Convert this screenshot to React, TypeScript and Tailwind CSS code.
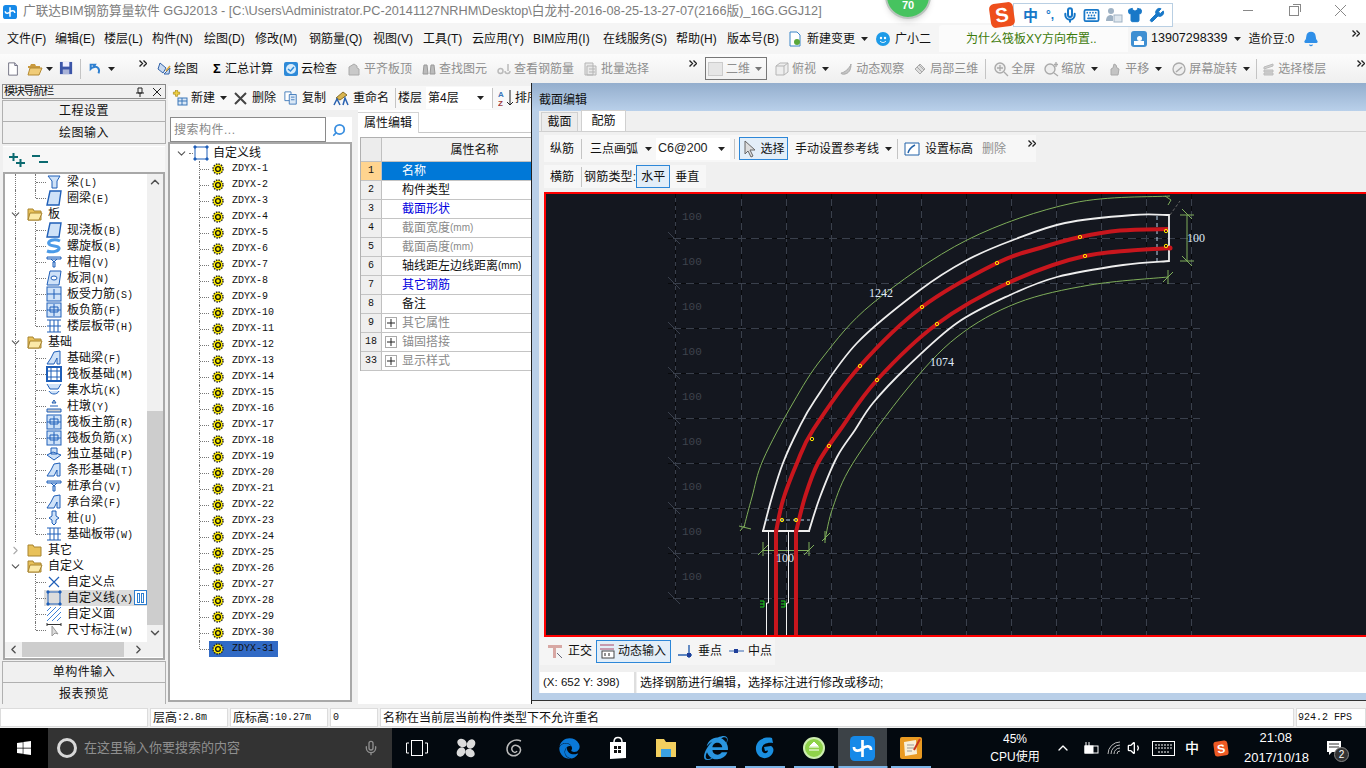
import { ChevronDown, ChevronRight, ChevronUp, ChevronLeft, Mic, Keyboard, Shirt, Wrench, Bell, Volume1, Search } from "lucide-react";
import { FaWindows, FaEdge, FaInternetExplorer } from "react-icons/fa";
import type { ReactNode } from "react";

const Arrow = ({ className = "" }: { className?: string }) => (
  <svg width="7" height="4" viewBox="0 0 7 4" className={`shrink-0 ${className}`}><path d="M0 0h7L3.5 4z" fill="#222" /></svg>
);

const Sep = ({ className = "" }: { className?: string }) => <div className={`w-px h-[20px] shrink-0 bg-[#c4c4c4] ${className}`} />;

const More = ({ className = "" }: { className?: string }) => (
  <svg width="8" height="7" viewBox="0 0 8 7" className={`shrink-0 ${className}`} fill="none" stroke="#222" strokeWidth="1.4"><path d="M0.5 0.5L3.5 3.5L0.5 6.5M4.5 0.5L7.5 3.5L4.5 6.5" /></svg>
);

function Ico({ children, s = 16, className = "" }: { children: ReactNode; s?: number; className?: string }) {
  return <svg width={s} height={s} viewBox="0 0 16 16" className={`shrink-0 ${className}`}>{children}</svg>;
}

// gray disabled tool icon
const GrayIco = ({ kind }: { kind: string }) => (
  <Ico>
    {kind === "stack" && <path d="M3 14V6l5-3 3 2v2l2 1v6z" fill="#c9c9c9" stroke="#aaa" />}
    {kind === "bino" && <path d="M2 13l1-9h3l1 9zM9 13l1-9h3l1 9z" fill="#bbb" stroke="#999" />}
    {kind === "link" && <path d="M2 10a2.5 2.5 0 0 1 5 0 2.5 2.5 0 0 1-5 0zM9 10a2.5 2.5 0 0 0 5 0M12 3v7" fill="none" stroke="#bbb" strokeWidth="1.5" />}
    {kind === "batch" && <path d="M2 2h8v12H2zM4 5h9v9H4zM6 8h6M6 11h6" fill="#e8e8e8" stroke="#b5b5b5" />}
    {kind === "box" && <path d="M2 5l4-3h8v9l-4 3H2zM2 5h8v9M10 5l4-3" fill="#eee" stroke="#b5b5b5" />}
    {kind === "orbit" && <path d="M3 12C6 12 12 7 13 3c0 4-1 9-6 10-2 .5-4 0-4-1z" fill="#c4c4c4" stroke="#aaa" />}
    {kind === "cube" && <path d="M3 8l5-5 5 5-5 5zM5 6l5 5M7 4l5 5" fill="#ddd" stroke="#aaa" />}
    {kind === "zoom" && <><circle cx="7" cy="7" r="5" fill="#eee" stroke="#aaa" strokeWidth="1.4" /><path d="M11 11l4 4M4 7h6M7 4v6" stroke="#aaa" strokeWidth="1.3" /></>}
    {kind === "zoom2" && <><circle cx="7" cy="8" r="5" fill="#eee" stroke="#aaa" strokeWidth="1.4" /><path d="M11 12l4 3M13 1v5M11 3.500h4" stroke="#aaa" strokeWidth="1.3" /></>}
    {kind === "hand" && <path d="M4 14V8l2-1 1-4 2 1 1 3 2 1-1 6z" fill="#c4c4c4" stroke="#aaa" />}
    {kind === "rotate" && <><circle cx="8" cy="8" r="6" fill="#eee" stroke="#aaa" strokeWidth="1.3" /><path d="M5 11l6-5" stroke="#aaa" strokeWidth="1.5" /></>}
    {kind === "floors" && <path d="M4 6l9-3v2L4 8zM4 9h9v2H4zM4 12h9v2H4z" fill="#d2d2d2" stroke="#bbb" />}
  </Ico>
);

function Tool({ icon, label, ml, gray, arrow }: { icon: ReactNode; label: string; ml: string; gray?: boolean; arrow?: boolean }) {
  return (
    <div className={`flex items-center shrink-0 ${ml}`}>
      {icon}
      <span className={`ml-[2px] ${gray ? "text-[#8f8f8f]" : "text-[#111]"}`}>{label}</span>
      {arrow && <Arrow className="ml-[6px]" />}
    </div>
  );
}

const AppLogo = ({ s = 14 }: { s?: number }) => (
  <svg width={s} height={s} viewBox="0 0 16 16" className="shrink-0">
    <rect width="16" height="16" rx="3" fill="#1689e8" />
    <path d="M8 2.500v11M2.500 7c0 3 3.500 3 5.500 1s5.500-2 5.500 1" fill="none" stroke="#fff" strokeWidth="1.700" />
  </svg>
);

const menus = [
  ["文件(F)", "w-[48px]"], ["编辑(E)", "w-[49px]"], ["楼层(L)", "w-[48px]"], ["构件(N)", "w-[52px]"], ["绘图(D)", "w-[51px]"],
  ["修改(M)", "w-[54px]"], ["钢筋量(Q)", "w-[64px]"], ["视图(V)", "w-[50px]"], ["工具(T)", "w-[49px]"], ["云应用(Y)", "w-[61px]"],
  ["BIM应用(I)", "w-[70px]"], ["在线服务(S)", "w-[73px]"], ["帮助(H)", "w-[51px]"], ["版本号(B)", "w-[60px]"],
];

function TitleBar() {
  return (
    <div className="h-[23px] bg-white flex items-center shrink-0 relative text-[12.7px] text-[#7d7d7d]">
      <div className="ml-[3px]"><AppLogo /></div>
      <span className="ml-[6px] whitespace-nowrap">广联达BIM钢筋算量软件 GGJ2013 - [C:\Users\Administrator.PC-20141127NRHM\Desktop\白龙村-2016-08-25-13-27-07(2166版)_16G.GGJ12]</span>
      {/* floating speed ball */}
      <div className="absolute left-[885px] top-[-27px] w-[46px] h-[46px] rounded-full bg-[#46c35f] border-2 border-[#b9c4bd] shadow-md flex items-end justify-center pb-[4px] text-white text-[11px] font-bold">70</div>
      {/* ime bar */}
      <div className="absolute left-[1013px] top-[3px] w-[160px] h-[24px] bg-white border border-[#b9cfe3] flex items-center pl-[9px] text-[#1878c8] z-10">
        <span className="text-[15px] font-bold leading-none">中</span>
        <span className="text-[12px] font-bold leading-none ml-[8px]">°,</span>
        <Mic size={16} strokeWidth={3} className="ml-[8px]" />
        <Keyboard size={17} strokeWidth={2.5} className="ml-[5px]" />
        <svg width="18" height="16" viewBox="0 0 18 16" className="ml-[5px]"><circle cx="6" cy="4" r="3" fill="#9fb2c4" /><path d="M1 14c0-4 2-6 5-6l2 1v5z" fill="#9fb2c4" /><rect x="9" y="8" width="8" height="7" fill="#dfe7ee" stroke="#9fb2c4" /></svg>
        <Shirt size={16} fill="#1878c8" strokeWidth={1.5} className="ml-[4px]" />
        <Wrench size={16} fill="#1878c8" strokeWidth={1.5} className="ml-[6px]" />
      </div>
      <div className="absolute left-[990px] top-[3px] w-[24px] h-[24px] rounded-[5px] bg-[#ee4f1c] rotate-[-8deg] flex items-center justify-center text-white text-[20px] font-bold leading-none z-20">S</div>
      <div className="absolute right-[20px] top-[5px] flex items-center gap-[36px]">
        <div className="w-[10px] h-px bg-[#888]" />
        <div className="w-[10px] h-[10px] border border-[#888] relative"><div className="absolute -top-[3px] -right-[3px] w-[8px] h-[8px] border-t border-r border-[#888]" /></div>
        <svg width="11" height="11" viewBox="0 0 11 11"><path d="M0 0l11 11M11 0L0 11" stroke="#888" /></svg>
      </div>
    </div>
  );
}

function MenuBar() {
  return (
    <div className="h-[31px] bg-[#f5f5f5] flex items-center shrink-0 text-[12px] text-[#111] pl-[7px] whitespace-nowrap">
      {menus.map(([m, w]) => <span key={m} className={`${w} shrink-0`}>{m}</span>)}
      <Ico><path d="M3 1h7l3 3v11H3z" fill="#fff" stroke="#3a86c8" /><circle cx="10" cy="11" r="3" fill="#5aa83c" /></Ico>
      <span className="ml-[4px]">新建变更</span>
      <Arrow className="ml-[6px]" />
      <Ico className="ml-[7px]"><circle cx="8" cy="8" r="7" fill="#1e9be8" /><circle cx="6" cy="7" r="1.2" fill="#fff" /><circle cx="10" cy="7" r="1.2" fill="#fff" /><path d="M5 10c2 2 4 2 6 0" stroke="#fff" fill="none" /></Ico>
      <span className="ml-[4px]">广小二</span>
      <div className="ml-[8px] w-[189px] h-[27px] bg-[#fbfbfb] rounded-t-[3px] flex items-center pl-[27px] text-[#3c7a0a]">为什么筏板XY方向布置..</div>
      <div className="w-[16px] h-[16px] rounded-[3px] bg-[#3f8fd2] ml-[3px] flex flex-col items-center justify-end"><div className="w-[5px] h-[5px] rounded-full bg-white" /><div className="w-[10px] h-[4px] bg-white mb-[2px]" /></div>
      <span className="ml-[4px] text-[12.5px]">13907298339</span>
      <Arrow className="ml-[6px]" />
      <span className="ml-[8px]">造价豆:0</span>
      <Bell size={16} fill="#2f8fe8" stroke="#2f8fe8" className="ml-[8px]" />
      <More className="ml-[33px] -mt-[10px]" />
    </div>
  );
}

function ToolBar() {
  return (
    <div className="h-[29px] bg-gradient-to-b from-[#fcfcfc] to-[#efefef] flex items-center shrink-0 text-[12px] whitespace-nowrap pl-[6px]">
      <Ico s={14}><path d="M3 1h7l3 3v11H3z" fill="#fff" stroke="#667" /><path d="M10 1v3h3" fill="#dde" stroke="#667" /></Ico>
      <Ico className="ml-[7px]"><path d="M1 5h2l1-2h4l1 2h4v2H1z" fill="#c99a3e" /><path d="M1 14l2-7h12l-3 7z" fill="#f0cc78" stroke="#b48a32" /></Ico>
      <Arrow className="ml-[3px]" />
      <Ico className="ml-[6px]" s={15}><path d="M1 1h13v13H1z" fill="#3c55a8" /><path d="M4 1h7v5H4z" fill="#eef" /><path d="M4 9h7v5H4z" fill="#a9b3d8" /></Ico>
      <Sep className="ml-[6px]" />
      <Ico className="ml-[7px]" s={14}><path d="M12 13c2-5-1-9-6-7L8 3H3v5l2-2" fill="none" stroke="#2e7fd0" strokeWidth="2.2" /></Ico>
      <Arrow className="ml-[6px]" />
      <More className="ml-[24px] -mt-[10px]" />
      <Tool ml="ml-[9px]" label="绘图" icon={<Ico><path d="M4 2l6 5-3 5-5-4zM8 13l6-6-1 6z" fill="#c8daf2" stroke="#3363a8" /><path d="M10 10l4-5" stroke="#d9a53a" strokeWidth="1.600" /></Ico>} />
      <Tool ml="ml-[13px]" label="汇总计算" icon={<span className="w-[12px] font-bold text-[13px] text-center">Σ</span>} />
      <Tool ml="ml-[10px]" label="云检查" icon={<Ico><rect x="1" y="1" width="14" height="14" rx="2" fill="#2e8ad8" /><circle cx="8" cy="8" r="5" fill="#d8ecfb" /><path d="M5 8l2.500 2 3.500-4" stroke="#2e8ad8" strokeWidth="1.500" fill="none" /></Ico>} />
      <Tool ml="ml-[9px]" gray label="平齐板顶" icon={<GrayIco kind="stack" />} />
      <Tool ml="ml-[9px]" gray label="查找图元" icon={<GrayIco kind="bino" />} />
      <Tool ml="ml-[9px]" gray label="查看钢筋量" icon={<GrayIco kind="link" />} />
      <Tool ml="ml-[9px]" gray label="批量选择" icon={<GrayIco kind="batch" />} />
      <More className="ml-[40px] -mt-[10px]" />
      <div className="ml-[8px] w-[62px] h-[23px] border border-[#777] flex items-center pl-[2px] text-[#8f8f8f]">
        <div className="w-[15px] h-[14px] bg-[#e6e6e6] border border-[#ccc]" />
        <span className="ml-[3px]">二维</span>
        <Arrow className="ml-[5px] opacity-60" />
      </div>
      <Tool ml="ml-[7px]" gray arrow label="俯视" icon={<GrayIco kind="box" />} />
      <Tool ml="ml-[9px]" gray label="动态观察" icon={<GrayIco kind="orbit" />} />
      <Tool ml="ml-[8px]" gray label="局部三维" icon={<GrayIco kind="cube" />} />
      <Sep className="ml-[7px]" />
      <Tool ml="ml-[7px]" gray label="全屏" icon={<GrayIco kind="zoom" />} />
      <Tool ml="ml-[8px]" gray arrow label="缩放" icon={<GrayIco kind="zoom2" />} />
      <Tool ml="ml-[9px]" gray arrow label="平移" icon={<GrayIco kind="hand" />} />
      <Tool ml="ml-[9px]" gray arrow label="屏幕旋转" icon={<GrayIco kind="rotate" />} />
      <Sep className="ml-[6px]" />
      <Tool ml="ml-[3px]" gray label="选择楼层" icon={<GrayIco kind="floors" />} />
      <More className="ml-[31px] -mt-[10px]" />
    </div>
  );
}

type Node = { t: string; k?: string; i?: string; open?: boolean; last?: boolean };

const navTree: Node[] = [
  { t: "梁", k: "(L)", i: "beam" }, { t: "圈梁", k: "(E)", i: "plate", last: true },
  { t: "板", open: true },
  { t: "现浇板", k: "(B)", i: "plate" }, { t: "螺旋板", k: "(B)", i: "spiral" }, { t: "柱帽", k: "(V)", i: "cap" }, { t: "板洞", k: "(N)", i: "hole" },
  { t: "板受力筋", k: "(S)", i: "grid" }, { t: "板负筋", k: "(F)", i: "grid2" }, { t: "楼层板带", k: "(H)", i: "band", last: true },
  { t: "基础", open: true },
  { t: "基础梁", k: "(F)", i: "beam2" }, { t: "筏板基础", k: "(M)", i: "raft" }, { t: "集水坑", k: "(K)", i: "pit" }, { t: "柱墩", k: "(Y)", i: "pier" },
  { t: "筏板主筋", k: "(R)", i: "grid2" }, { t: "筏板负筋", k: "(X)", i: "grid2" }, { t: "独立基础", k: "(P)", i: "foot" }, { t: "条形基础", k: "(T)", i: "beam2" },
  { t: "桩承台", k: "(V)", i: "cap" }, { t: "承台梁", k: "(F)", i: "beam2" }, { t: "桩", k: "(U)", i: "pile" }, { t: "基础板带", k: "(W)", i: "band", last: true },
];

function TreeIcon({ i }: { i: string }) {
  const b = "#1f5fb8";
  const l = "#cfe2f8";
  return (
    <Ico>
      {i === "beam" && <path d="M2 2h12l-3 5v7H6V7z" fill={l} stroke={b} />}
      {i === "plate" && <path d="M4 1h11l-2 14H1z" fill={l} stroke={b} strokeWidth="1.4" />}
      {i === "spiral" && <path d="M14 3C8 0 1 3 3 6s9 1 10 4-7 5-12 3" fill="none" stroke="#4b9be8" strokeWidth="3" />}
      {i === "cap" && <path d="M1 3h14v2H1zM5 5l3 3 3-3M7 8h2v5H7z" fill={l} stroke={b} />}
      {i === "hole" && <><path d="M4 1h11l-2 14H1z" fill={l} stroke={b} /><ellipse cx="8" cy="8" rx="3" ry="2" fill="#fff" stroke={b} /></>}
      {i === "grid" && <><rect x="1" y="1" width="14" height="14" fill={l} stroke={b} /><path d="M1 8h14M8 3v10" stroke={b} /></>}
      {i === "grid2" && <><rect x="1" y="1" width="14" height="14" fill={l} stroke={b} /><path d="M4 5h8v5H4zM1 8h14M8 2v12" fill="none" stroke={b} /></>}
      {i === "band" && <path d="M1 2h14M1 14h14M4 2v12M8 2v12M12 2v12M1 8h14" stroke={b} fill="none" />}
      {i === "beam2" && <path d="M1 14l4-6 3-6 6-1v13h-3V8l-3 6z" fill={l} stroke={b} />}
      {i === "raft" && <><rect x="1" y="1" width="14" height="14" fill="#fff" stroke={b} strokeWidth="2" /><path d="M5 1v14M11 1v14M1 5h14M1 11h14" stroke={b} /></>}
      {i === "pit" && <path d="M1 2l3 5h8l3-5M3 9c2 4 8 4 10 0" fill={l} stroke={b} />}
      {i === "pier" && <path d="M6 5l2-3 2 3zM4 8h8M1 11h14v3H1z" fill="#ccc" stroke={b} />}
      {i === "foot" && <path d="M1 9l6-3 8 3-7 5zM5 2h6v6H5z" fill={l} stroke={b} />}
      {i === "pile" && <path d="M6 1h4v5l3 2-3 2v3l-2 2-2-2v-3L3 8l3-2z" fill={l} stroke={b} />}
      {i === "cross" && <path d="M3 3l10 10M13 3L3 13" stroke={b} strokeWidth="1.2" />}
      {i === "line" && <><rect x="2" y="2" width="12" height="12" fill="none" stroke={b} /><path d="M1 1h2v2H1zM13 1h2v2h-2zM1 13h2v2H1zM13 13h2v2h-2z" fill={b} stroke={b} /></>}
      {i === "hatch" && <path d="M1 5l4-4M1 10l9-9M1 15L15 1M6 15l9-9M11 15l4-4" stroke="#3f82d8" />}
      {i === "dim" && <><path d="M1 1v3M15 1v3M1 2.5h14" stroke="#333" /><path d="M6 4v10l3-3 3 1z" fill="#ddd" stroke="#999" /></>}
    </Ico>
  );
}

const Guide = ({ half }: { half?: boolean }) => <div className={`border-r border-dotted border-[#777] self-start ${half ? "h-2" : "h-4"}`} />;

function Folder({ open }: { open?: boolean }) {
  return (
    <Ico className="ml-[5px]">
      <path d="M1 3h5l1 2h7v9H1z" fill="#e8c15a" stroke="#a8842e" />
      {open && <path d="M3 7h12l-3 7H1z" fill="#fbe9a8" stroke="#a8842e" />}
    </Ico>
  );
}

function NavRow({ n, outer = true }: { n: Node; outer?: boolean }) {
  return (
    <div className="h-4 flex items-center">
      <div className="w-[11px] self-start"><div className={outer ? "" : "invisible"}><Guide /></div></div>
      <div className="w-5 flex justify-end self-start"><div className="w-px"><Guide half={n.last} /></div></div>
      <div className="w-[10px] border-t border-dotted border-[#777]" />
      <TreeIcon i={n.i ?? "plate"} />
      <span className="ml-[5px] whitespace-nowrap text-[12px] leading-none">{n.t}<span className="font-['Liberation_Mono',monospace] text-[10px]">{n.k}</span></span>
    </div>
  );
}

function FolderRow({ t, open }: { t: string; open?: boolean }) {
  return (
    <div className="h-4 flex items-center">
      <div className="w-[3px]" />
      <div className="w-[14px] flex justify-center bg-white">
        {open ? <ChevronDown size={13} strokeWidth={2} className="text-[#555]" /> : <ChevronRight size={13} strokeWidth={2} className="text-[#aaa]" />}
      </div>
      <Folder open={open} />
      <span className="ml-[5px] text-[12px] leading-none">{t}</span>
    </div>
  );
}

function NavPanel() {
  return (
    <div className="w-[168px] shrink-0 flex flex-col bg-[#f0f0f0] pl-[2px] text-[12px] text-[#111]">
      <div className="h-[15px] mt-[1px] border border-[#8a8a8a] flex items-center justify-between pl-px pr-[3px] w-[164px] shrink-0">
        <span className="text-[11px] tracking-[-1.2px]">模块导航栏</span>
        <div className="flex items-center gap-[9px] mr-[1px]">
          <svg width="8" height="10" viewBox="0 0 8 10"><path d="M2 1h4v5H2zM0 6h8M4 6v4" stroke="#222" fill="none" /></svg>
          <svg width="8" height="8" viewBox="0 0 8 8"><path d="M0 0l8 8M8 0L0 8" stroke="#222" /></svg>
        </div>
      </div>
      <div className="mt-[1px] h-[22px] w-[164px] border border-[#b0b0b0] flex items-center justify-center tracking-[0.5px] shrink-0">工程设置</div>
      <div className="h-[22px] w-[164px] border border-t-0 border-[#b0b0b0] flex items-center justify-center tracking-[0.5px] shrink-0">绘图输入</div>
      <div className="mt-[2px] h-[26px] w-[162px] ml-px bg-[#f7f7f7] flex items-center pl-[5px] gap-[5px] shrink-0 border-t border-white">
        <svg width="18" height="16" viewBox="0 0 18 16"><path d="M1 5h9M5.500 1v8M8 11h9M12.500 7v8" stroke="#0b6a70" strokeWidth="2" fill="none" /></svg>
        <svg width="18" height="16" viewBox="0 0 18 16"><path d="M1 4h8M8 10h9" stroke="#0b6a70" strokeWidth="2" fill="none" /></svg>
      </div>
      <div className="h-[488px] w-[162px] ml-px border-2 border-[#a8a8a8] flex flex-col shrink-0 bg-white">
        <div className="flex-1 flex min-h-0">
          <div className="w-[142px] overflow-hidden">
            {navTree.map((n) =>
              n.i ? <NavRow key={n.t} n={n} /> : <div key={n.t} className="relative"><div className="absolute left-0 top-0 w-[11px]"><Guide /></div><FolderRow t={n.t} open={n.open} /></div>
            )}
            <FolderRow t="其它" />
            <FolderRow t="自定义" open />
            <NavRow outer={false} n={{ t: "自定义点", i: "cross" }} />
            <div className="relative bg-[#dcdcdc] ml-[39px] h-4">
              <div className="-ml-[39px] w-[142px]">
                <NavRow outer={false} n={{ t: "自定义线", k: "(X)", i: "line" }} />
              </div>
              <div className="absolute right-0 top-0 w-[13px] h-[15px] bg-white border border-[#2d7ed0] flex justify-center gap-px pt-[2px]">
                <div className="w-[3px] h-[10px] border border-[#2d7ed0]" /><div className="w-[3px] h-[10px] border border-[#2d7ed0]" />
              </div>
            </div>
            <NavRow outer={false} n={{ t: "自定义面", i: "hatch" }} />
            <NavRow outer={false} n={{ t: "尺寸标注", k: "(W)", i: "dim", last: true }} />
          </div>
          <div className="w-[16px] bg-[#f0f0f0] flex flex-col">
            <ChevronUp size={14} strokeWidth={2.5} className="mx-auto mt-[1px] shrink-0 text-[#505050]" />
            <div className="h-[222px] shrink-0" />
            <div className="h-[214px] bg-[#cdcdcd] shrink-0" />
            <ChevronDown size={14} strokeWidth={2.5} className="mx-auto mt-[1px] shrink-0 text-[#505050]" />
          </div>
        </div>
        <div className="h-[15px] bg-[#f0f0f0] flex items-center shrink-0 mb-[1px]">
          <ChevronLeft size={13} strokeWidth={2.5} className="ml-[2px] text-[#505050]" />
          <div className="ml-[2px] w-[102px] h-full bg-[#cdcdcd]" />
          <ChevronRight size={13} strokeWidth={2.5} className="ml-[8px] text-[#505050]" />
        </div>
      </div>
      <div className="mt-px h-[22px] w-[164px] border border-[#b0b0b0] flex items-center justify-center tracking-[0.5px] shrink-0">单构件输入</div>
      <div className="h-[22px] w-[164px] border border-t-0 border-[#b0b0b0] flex items-center justify-center tracking-[0.5px] shrink-0">报表预览</div>
    </div>
  );
}

const Sun = () => (
  <svg width="12" height="12" viewBox="0 0 12 12" className="shrink-0">
    <circle cx="6" cy="6" r="5" fill="#ffee00" stroke="#222" strokeWidth="1.400" strokeDasharray="1.500 1.100" />
    <circle cx="6" cy="6" r="2.400" fill="#ffee00" stroke="#111" strokeWidth="1.300" />
  </svg>
);

function CompTree() {
  const ids = Array.from({ length: 31 }, (_, i) => i + 1);
  return (
    <div className="flex-1 min-h-0 border-2 border-[#a8a8a8] bg-white text-[12px] text-[#111]">
      <div className="h-4 mt-[1px] flex items-center pl-[5px]">
        <ChevronDown size={13} strokeWidth={2} className="text-[#555]" />
        <div className="w-[4px] ml-[1px] border-t border-dotted border-[#777]" />
        <TreeIcon i="line" />
        <span className="ml-[4px]">自定义线</span>
      </div>
      {ids.map((n) => (
        <div key={n} className="h-4 flex items-center">
          <div className={`w-[30px] border-r border-dotted border-[#777] self-start ${n === 31 ? "h-2" : "h-4"}`} />
          <div className="w-[9px] border-t border-dotted border-[#777]" />
          <div className={`flex items-center h-4 w-[69px] ${n === 31 ? "bg-[#316ac5]" : ""} pl-[3px]`}>
            <Sun />
            <span className="ml-[8px] font-['Liberation_Mono',monospace] text-[10px] leading-none text-[#111]">ZDYX-{n}</span>
          </div>
        </div>
      ))}
    </div>
  );
}

function SubToolBar() {
  return (
    <div className="h-[27px] pt-[3px] shrink-0 overflow-hidden bg-[#f0f0f0]">
      <div className="h-[24px] bg-[#f8f8f8] flex items-center whitespace-nowrap text-[12px] text-[#111] pl-[4px]">
        <Ico><path d="M2 3h3V0h3v3h3v3H8v3H5V6H2z" transform="scale(.7)" fill="#f0d040" stroke="#a88a20" /><rect x="6" y="8" width="9" height="7" fill="#dbe8f6" stroke="#3a76b8" /><path d="M6 11h9M10 8v7" stroke="#3a76b8" /></Ico>
        <span className="ml-[3px] shrink-0">新建</span>
        <Arrow className="ml-[5px]" />
        <svg width="13" height="13" viewBox="0 0 13 13" className="ml-[7px] shrink-0"><path d="M1 1l11 11M12 1L1 12" stroke="#444" strokeWidth="2" /></svg>
        <span className="ml-[5px] shrink-0">删除</span>
        <Ico className="ml-[8px]" s={14}><path d="M1 1h7v10H1z" fill="#fff" stroke="#3a76b8" /><path d="M6 4h8v11H6z" fill="#dbe8f6" stroke="#3a76b8" /><path d="M8 7h4M8 10h4" stroke="#3a76b8" /></Ico>
        <span className="ml-[4px] shrink-0">复制</span>
        <Ico className="ml-[7px]"><path d="M3 8l7-6 4 3-7 5z" fill="#d8b44e" stroke="#8a6f24" /><path d="M1 15l3-6 3 6M10 15l2-7 3 7" fill="none" stroke="#2a62b0" strokeWidth="1.500" /></Ico>
        <span className="ml-[4px] shrink-0">重命名</span>
        <Sep className="ml-[6px]" />
        <span className="ml-[2px] shrink-0">楼层</span>
        <div className="ml-[4px] w-[66px] h-[22px] bg-white flex items-center pl-[2px] shrink-0">第4层<Arrow className="ml-auto mr-[8px]" /></div>
        <Sep />
        <svg width="16" height="18" viewBox="0 0 16 18" className="ml-[5px] shrink-0"><text x="0" y="8" fontSize="8" fontWeight="700" fill="#3a76b8">A</text><text x="0" y="17" fontSize="8" fontWeight="700" fill="#a03a3a">Z</text><path d="M12 1v15M9 13l3 3 3-3" fill="none" stroke="#222" /></svg>
        <span className="ml-[1px] shrink-0">排序</span>
      </div>
    </div>
  );
}

function MiddlePanel() {
  return (
    <div className="w-[190px] shrink-0 flex flex-col pt-[7px] pb-[2px] bg-[#f0f0f0]">
      <div className="h-[25px] flex items-stretch w-[184px] shrink-0">
        <div className="ml-[2px] w-[156px] border border-[#8a8a8a] bg-white flex items-center pl-[3px] text-[12px] text-[#888] tracking-[0.5px]">搜索构件...</div>
        <div className="w-[26px] bg-white flex items-center justify-center"><Search size={14} strokeWidth={3} className="text-[#3a8fe0] -scale-x-100" /></div>
      </div>
      <div className="w-[184px] flex-1 min-h-0 flex flex-col"><CompTree /></div>
    </div>
  );
}

const rows: [string, string, string, string?][] = [
  ["1", "名称", "sel"], ["2", "构件类型", ""], ["3", "截面形状", "blue"], ["4", "截面宽度", "gray", "(mm)"], ["5", "截面高度", "gray", "(mm)"],
  ["6", "轴线距左边线距离", "", "(mm)"], ["7", "其它钢筋", "blue"], ["8", "备注", ""], ["9", "其它属性", "plus"], ["18", "锚固搭接", "plus"], ["33", "显示样式", "plus"],
];

function PropPanel() {
  return (
    <div className="w-[173px] shrink-0 bg-white flex flex-col pt-[2px] text-[12px] text-[#111]">
      <div className="h-[21px] border-b border-[#c8c8c8] flex shrink-0">
        <div className="w-[61px] h-[21px] border-r border-t border-[#d4d4d4] flex items-center justify-center bg-white">属性编辑</div>
      </div>
      <div className="mt-[4px] ml-[2px] border-l border-t border-[#b0b0b0]">
        <div className="h-[24px] flex border-b border-[#c0c0c0]">
          <div className="w-[21px] bg-[#ececec] border-r border-[#c0c0c0]" />
          <div className="flex-1 bg-[#f2f2f2] flex items-center justify-center pl-[36px]">属性名称</div>
        </div>
        {rows.map(([n, t, kind, u]) => (
          <div key={n} className="h-[19px] flex border-b border-[#c4c4c4] leading-none">
            <div className={`w-[21px] shrink-0 flex items-center justify-center border-r border-[#c0c0c0] font-['Liberation_Mono',monospace] text-[10px] ${kind === "sel" ? "bg-[#ffd48f]" : "bg-[#efefef]"}`}>{n}</div>
            <div className={`flex-1 flex items-center whitespace-nowrap overflow-hidden ${kind === "sel" ? "bg-[#0078d7] text-white" : ""} ${kind === "blue" ? "text-[#0000e0]" : ""} ${kind === "gray" || kind === "plus" ? "text-[#8a8a8a]" : ""} ${kind === "plus" ? "pl-[3px]" : "pl-[20px]"}`}>
              {kind === "plus" && (
                <span className="w-[12px] h-[12px] mr-[5px] border border-[#aaa] flex items-center justify-center">
                  <svg width="8" height="8" viewBox="0 0 8 8"><path d="M0 4h8M4 0v8" stroke="#222" /></svg>
                </span>
              )}
              {t}{u && <span className="text-[10px]">{u}</span>}
            </div>
          </div>
        ))}
      </div>
    </div>
  );
}

// smooth curve through measured points (catmull-rom)
type P = [number, number];
function smooth(pts: P[]) {
  let d = `M${pts[0][0]} ${pts[0][1]}`;
  for (let i = 0; i < pts.length - 1; i++) {
    const p0 = pts[Math.max(i - 1, 0)];
    const p1 = pts[i];
    const p2 = pts[i + 1];
    const p3 = pts[Math.min(i + 2, pts.length - 1)];
    const c1x = p1[0] + (p2[0] - p0[0]) / 6;
    const c1y = p1[1] + (p2[1] - p0[1]) / 6;
    const c2x = p2[0] - (p3[0] - p1[0]) / 6;
    const c2y = p2[1] - (p3[1] - p1[1]) / 6;
    d += `C${c1x} ${c1y} ${c2x} ${c2y} ${p2[0]} ${p2[1]}`;
  }
  return d;
}

const whiteOut: P[] = [[1169, 215], [1133, 215], [1065, 223], [1013, 240], [967, 260], [920, 290], [857, 343], [815, 400], [798, 430], [783, 463], [772, 497], [763, 531]];
const whiteIn: P[] = [[1169, 261], [1123, 265], [1057, 277], [1010, 295], [957, 323], [907, 367], [873, 403], [855, 430], [837, 457], [820, 497], [809, 531]];
const red1: P[] = [[1168, 229], [1120, 230.5], [1080, 237], [1040, 248], [997, 263], [922, 307], [860, 366], [813, 430], [797, 463], [783, 500], [776, 532]];
const red2: P[] = [[1170, 248], [1085, 256], [1008, 283], [937, 324], [877, 380], [840, 430], [818, 463], [805, 497], [796, 532]];
const greenOut: P[] = [[1170, 196], [1073, 203], [967, 240], [873, 303], [823, 357], [793, 403], [763, 460], [752, 497], [744, 527]];
const greenIn: P[] = [[1168, 277], [1090, 285], [1017, 303], [957, 337], [907, 389], [853, 463], [833, 507], [825, 540]];

const gx = [741, 786, 831, 876, 921, 966, 1011, 1056, 1101, 1146, 1191];
const gy = [238, 283, 328, 373, 418, 463, 508, 553, 598];

function Drawing() {
  return (
    <svg viewBox="546 194 830 441" width="830" height="441" className="block">
      {gx.map((x) => (
        <g key={x}>
          <line x1={x + 0.5} y1="194" x2={x + 0.5} y2="635" stroke="#3a404c" />
          <line x1={x + 0.5} y1="194" x2={x + 0.5} y2="635" stroke="#08090c" strokeDasharray="5 7" />
        </g>
      ))}
      <line x1="675.5" y1="194" x2="675.5" y2="600" stroke="#3a404c" />
      <line x1="675.5" y1="194" x2="675.5" y2="600" stroke="#08090c" strokeDasharray="4 4" />
      {gy.map((y) => (
        <g key={y}>
          <line x1="668" y1={y + 0.5} x2="1200" y2={y + 0.5} stroke="#3a404c" />
          <line x1="668" y1={y + 0.5} x2="1200" y2={y + 0.5} stroke="#08090c" strokeDasharray="5 8" />
          <path d={`M668 ${y - 6}l12 12`} stroke="#3a404c" />
          <text x="682" y={y - 18} fill="#3f434d" fontSize="11" fontFamily="Liberation Mono">100</text>
        </g>
      ))}
      {/* green dimension arcs */}
      <g fill="none" stroke="#7fae5a" strokeWidth="1">
        <path d={smooth(greenOut)} />
        <path d={smooth(greenIn)} />
        <path d="M1187 215V261M1180 215h14M1180 261h14M1182 209l10 10M1182 256l10 10M1168 270v14M1163 282l10-10M1165 196l6 4-3 5" />
        <path d="M763 550.500H809M763 542v14M809 542v14M758 555l10-10M804 555l10-10M739 526l12 3M740 531l5-6M822 541l8-8M825 531v12" />
      </g>
      <path d="M1170 215l10-14" stroke="#666" strokeDasharray="3 2" />
      {/* white outline */}
      <g fill="none" stroke="#eee" strokeWidth="1.800">
        <path d={smooth(whiteOut)} />
        <path d={smooth(whiteIn)} />
        <path d="M1169 214V262M762 531H810" />
      </g>
      <path d="M768.500 532V603H766.500V635M788.500 532V603H786.500V635" fill="none" stroke="#f2f2f2" />
      <path d="M1157 216V261M765 520H810" stroke="#b9d3ea" strokeDasharray="4 3" fill="none" />
      {/* rebars */}
      <g fill="none" stroke="#c8161d" strokeWidth="4">
        <path d={smooth(red1)} />
        <path d={smooth(red2)} />
        <path d="M776 530V640M796 530V640" />
      </g>
      <circle cx="1170" cy="248" r="2.500" fill="#c8161d" />
      {[[1166, 231], [1166, 246], [1080, 237], [1085, 256], [997, 263], [1008, 283], [922, 307], [937, 324], [860, 366], [877, 380], [812, 439], [829, 446], [782, 520], [796, 520]].map(([x, y]) => (
        <circle key={`${x}-${y}`} cx={x} cy={y} r="1.700" fill="none" stroke="#ffe600" strokeWidth="1" />
      ))}
      <g fontFamily="Liberation Serif" fontSize="12" fill="#dfe9f5">
        <text x="869" y="297">1242</text>
        <text x="930" y="366">1074</text>
        <text x="1187" y="242">100</text>
        <text x="776" y="562">100</text>
      </g>
      <g stroke="#19d019" fill="none"><path d="M760 601h4v6h-4M764 604h-4M781 601h4v6h-4M785 604h-4" /></g>
    </svg>
  );
}

function EditorPanel() {
  return (
    <div className="flex-1 min-w-0 flex flex-col border-l border-[#222] bg-[#b9cfe8] overflow-hidden">
      <div className="h-[28px] flex items-center pl-[7px] pt-[6px] text-[12px] text-[#111] shrink-0 bg-gradient-to-b from-[#94aecd] to-[#b9d0ea]">截面编辑</div>
      <div className="h-[582px] ml-[7px] bg-[#f0f0f0] flex flex-col text-[12px] text-[#111] shrink-0 -mr-[30px]">
        <div className="h-[21px] flex items-end pl-[2px] border-b border-[#d0d0d0] shrink-0">
          <div className="w-[37px] h-[19px] border border-[#d0d0d0] border-b-0 bg-[#ececec] flex items-center justify-center">截面</div>
          <div className="ml-[3px] w-[45px] h-[21px] border border-[#d0d0d0] border-b-0 bg-white flex items-center justify-center">配筋</div>
        </div>
        <div className="ml-[5px] mt-[3px] h-[27px] w-[492px] bg-[#f7f7f7] flex items-center whitespace-nowrap shrink-0">
          <span className="ml-[6px]">纵筋</span>
          <Sep className="ml-[7px]" />
          <span className="ml-[8px]">三点画弧</span>
          <Arrow className="ml-[7px]" />
          <div className="ml-[4px] w-[76px] h-[22px] bg-white flex items-center pl-[2px] text-[#222] text-[12.5px]">C6@200<Arrow className="ml-auto mr-[5px]" /></div>
          <Sep className="ml-[4px]" />
          <div className="ml-[4px] w-[51px] h-[23px] border border-[#2d87d8] bg-[#e3eef8] flex items-center pl-[3px]">
            <svg width="14" height="18" viewBox="0 0 14 18"><path d="M2 1v13l3-3 3 6 2-1-3-6h5z" fill="#ddd" stroke="#666" /></svg>
            <span className="ml-[4px]">选择</span>
          </div>
          <span className="ml-[7px]">手动设置参考线</span>
          <Arrow className="ml-[6px]" />
          <Sep className="ml-[5px]" />
          <Ico className="ml-[6px]"><path d="M1 2h14v12H1z" fill="#fff" stroke="#2362a8" /><path d="M4 12c1-4 3-6 7-8" stroke="#2362a8" strokeWidth="1.500" fill="none" /></Ico>
          <span className="ml-[5px]">设置标高</span>
          <span className="ml-[9px] text-[#8f8f8f]">删除</span>
          <More className="ml-[22px] -mt-[10px]" />
        </div>
        <div className="ml-[5px] mt-[3px] h-[23px] w-[162px] bg-[#f7f7f7] flex items-center whitespace-nowrap shrink-0">
          <span className="ml-[6px]">横筋</span>
          <Sep className="ml-[7px]" />
          <span className="ml-[2px] tracking-[0.2px]">钢筋类型:</span>
          <div className="w-[34px] h-[23px] border border-[#2d87d8] bg-[#e3eef8] flex items-center justify-center">水平</div>
          <span className="ml-[5px]">垂直</span>
        </div>
        <div className="mt-[4px] ml-[5px] h-[445px] border-2 border-[#ff0000] bg-[#14171f] overflow-hidden shrink-0"><Drawing /></div>
        <div className="h-[28px] flex items-center ml-[1px] shrink-0 bg-[#f5f5f5] w-[235px]">
          <Ico className="ml-[7px]"><path d="M1 2h14v3H9v10H6V5H1z" fill="#d8a8a4" /><path d="M10 10l5 5" stroke="#667" /></Ico>
          <span className="ml-[5px]">正交</span>
          <div className="ml-[4px] w-[75px] h-[23px] border border-[#2d87d8] bg-[#e3eef8] flex items-center pl-[2px]">
            <Ico><path d="M1 2h14M1 6h14" stroke="#a46" /><rect x="3" y="8" width="12" height="7" fill="#fff" stroke="#444" /><path d="M6 10v3M10 10v3" stroke="#222" /></Ico>
            <span className="ml-[3px]">动态输入</span>
          </div>
          <Ico className="ml-[6px]"><path d="M1 12h14M12 2v13" stroke="#2a62b0" strokeWidth="1.400" /><rect x="10" y="10" width="4" height="4" fill="#1f3f9a" /></Ico>
          <span className="ml-[5px]">垂点</span>
          <Ico className="ml-[6px]"><path d="M1 8h15" stroke="#6c8fc4" strokeWidth="1.400" /><rect x="6" y="6" width="4" height="4" fill="#1f3f9a" /></Ico>
          <span className="ml-[4px]">中点</span>
        </div>
        <div className="mt-[7px] h-[21px] flex items-center shrink-0 pl-[1px]">
          <div className="w-[96px] h-[21px] bg-white border-r-2 border-[#dedede] flex items-center pl-[3px] text-[11.5px]">(X: 652 Y: 398)</div>
          <div className="ml-[1px] flex-1 h-[21px] bg-white flex items-center pl-[3px] whitespace-nowrap">选择钢筋进行编辑，选择标注进行修改或移动;</div>
        </div>
      </div>
      <div className="h-[8px] shrink-0 border-b border-[#333]" />
      <div className="flex-1 bg-[#f0f0f0]" />
    </div>
  );
}

function StatusBar() {
  const Cell = ({ w, children }: { w: string; children?: ReactNode }) => (
    <div className={`${w} h-[19px] bg-white border border-[#dcdcdc] mr-[2px] flex items-center pl-[2px] whitespace-nowrap shrink-0 leading-none`}>{children}</div>
  );
  const mono = "font-['Liberation_Mono',monospace] text-[10px]";
  return (
    <div className="h-[24px] bg-[#f0f0f0] flex items-end pb-px shrink-0 text-[12px] text-[#111] relative">
      <Cell w="w-[148px]" />
      <Cell w="w-[78px]">层高<span className={mono}>:2.8m</span></Cell>
      <Cell w="w-[98px]">底标高<span className={mono}>:10.27m</span></Cell>
      <Cell w="w-[48px]"><span className={mono}>0</span></Cell>
      <Cell w="w-[914px]">名称在当前层当前构件类型下不允许重名</Cell>
      <div className={`flex-1 h-[19px] bg-white border border-[#dcdcdc] flex items-center pl-[1px] ${mono}`}>924.2 FPS</div>
    </div>
  );
}

function Slot({ children, run, active, w = "w-[49px]", ml = "" }: { children: ReactNode; run?: boolean; active?: boolean; w?: string; ml?: string }) {
  return (
    <div className={`relative h-full ${w} ${ml} flex items-center justify-center shrink-0 ${active ? "bg-[#3c4247]" : ""}`}>
      {children}
      {run && <div className={`absolute bottom-0 left-1/2 -translate-x-1/2 h-[2px] bg-[#7cb4e6] ${active ? "w-full" : "w-[40px]"}`} />}
    </div>
  );
}

function TaskBar() {
  return (
    <div className="h-[40px] bg-[#03090f] flex items-stretch shrink-0 text-white overflow-hidden">
      <div className="w-[48px] bg-black flex items-center justify-center"><FaWindows size={16} /></div>
      <div className="w-[344px] bg-[#333333] flex items-center pl-[9px]">
        <div className="w-[20px] h-[20px] rounded-full border-[3px] border-[#d8d8d8]" />
        <span className="ml-[7px] text-[13px] text-[#8f8f8f]">在这里输入你要搜索的内容</span>
        <Mic size={16} className="ml-auto mr-[13px] text-[#8f8f8f]" />
      </div>
      <Slot>
        <svg width="22" height="16" viewBox="0 0 22 16" fill="none" stroke="#fff"><rect x="5.500" y=".5" width="11" height="15" /><path d="M3 3H.5v10H3M19 3h2.500v10H19" /></svg>
      </Slot>
      <Slot>
        <svg width="22" height="22" viewBox="0 0 22 22" fill="#dcdcdc">
          <ellipse cx="7" cy="6" rx="5" ry="4" transform="rotate(35 7 6)" />
          <ellipse cx="16" cy="7" rx="5" ry="4" transform="rotate(125 16 7)" />
          <ellipse cx="15" cy="16" rx="5" ry="4" transform="rotate(35 15 16)" />
          <ellipse cx="6" cy="15" rx="5" ry="4" transform="rotate(125 6 15)" />
        </svg>
      </Slot>
      <Slot>
        <svg width="20" height="20" viewBox="0 0 20 20" fill="none" stroke="#bbb" strokeWidth="1.500"><path d="M16 3C9 0 2 5 2 11s6 8 10 6 5-7 1-9-7 1-6 4 4 3 5 1" /></svg>
      </Slot>
      <Slot ml="ml-[6px]"><FaEdge size={21} className="text-[#0a78d7]" /></Slot>
      <Slot w="w-[47px]">
        <svg width="20" height="24" viewBox="0 0 20 24"><path d="M6 6c0-6 8-6 8 0" stroke="#fff" fill="none" strokeWidth="1.500" /><path d="M2 6h16v16l-16 1z" fill="#fff" /><path d="M6 10h3v3H6zM10 10h3v3h-3zM6 14h3v3H6zM10 14h3v3h-3z" fill="#111" /></svg>
      </Slot>
      <Slot>
        <svg width="22" height="20" viewBox="0 0 22 20"><path d="M1 1h8l2 3h10v15H1z" fill="#f2cf5f" /><rect x="6" y="11" width="10" height="8" fill="#3aa0e0" /></svg>
      </Slot>
      <Slot run ml="ml-[1px]"><FaInternetExplorer size={24} className="text-[#2a95df]" /></Slot>
      <Slot run>
        <svg width="22" height="24" viewBox="0 0 22 24"><path d="M18 2C8 0 1 6 2 14c1 7 8 10 13 7s6-9 2-11l-7 1 1 4 3-.5c0 3-5 4-6 0S10 6 19 7z" fill="#1a8fe0" /></svg>
      </Slot>
      <Slot run>
        <svg width="24" height="24" viewBox="0 0 24 24"><circle cx="12" cy="12" r="10" fill="#8fd24a" stroke="#cdeeb0" strokeWidth="2" /><path d="M7 11h10M7 14h10M12 6l4 4H8z" fill="#fff" stroke="#fff" /></svg>
      </Slot>
      <Slot run active>
        <AppLogo s={25} />
      </Slot>
      <Slot run w="w-[48px]">
        <svg width="24" height="24" viewBox="0 0 24 24"><rect x="1" y="1" width="22" height="22" rx="2" fill="#e99a22" /><path d="M5 6l12-2 1 14-12 2z" fill="#f8efd8" /><path d="M8 9h7M8 12h7M8 15h5" stroke="#999" /><path d="M15 14L21 3" stroke="#c8361d" strokeWidth="2" /></svg>
      </Slot>
      <div className="w-[47px] shrink-0" />
      <div className="w-[66px] shrink-0 flex flex-col items-center justify-center text-[12px] leading-[18px]"><span>45%</span><span>CPU使用</span></div>
      <div className="ml-[7px] flex items-center">
        <ChevronUp size={16} />
        <svg width="17" height="14" viewBox="0 0 17 14" fill="none" stroke="#fff" className="ml-[12px]"><rect x="2" y="5" width="13" height="7" /><rect x="2" y="5" width="8" height="7" fill="#fff" /><path d="M3 1v4M6 1v4" /></svg>
        <svg width="16" height="14" viewBox="0 0 16 14" fill="none" stroke="#bbb" className="ml-[7px]"><path d="M1 13a12 12 0 0 1 12-12M4 13a9 9 0 0 1 9-9M7 13a6 6 0 0 1 6-6M10 13a3 3 0 0 1 3-3" /></svg>
        <Volume1 size={16} className="ml-[4px]" />
        <svg width="23" height="15" viewBox="0 0 23 15" fill="none" stroke="#fff" className="ml-[9px]"><rect x=".5" y=".5" width="22" height="14" /><path d="M3 4h17M3 7h17M6 11h11" strokeDasharray="2 1" /></svg>
      </div>
      <span className="ml-[10px] self-center text-[14px] font-medium">中</span>
      <div className="ml-[15px] self-center w-[14px] h-[15px] rounded-[3px] bg-[#ee5a24] rotate-[-8deg] flex items-center justify-center text-[12px] font-bold leading-none">S</div>
      <div className="ml-[5px] w-[76px] shrink-0 flex flex-col items-end justify-center leading-[20px]">
        <span className="pr-[17px] text-[13px]">21:08</span>
        <span className="text-[13px]">2017/10/18</span>
      </div>
      <div className="ml-[17px] relative self-center">
        <svg width="16" height="16" viewBox="0 0 16 16"><path d="M1 1h14v11H6l-3 3v-3H1z" fill="#fff" /><path d="M3 4h10M3 7h10" stroke="#333" /></svg>
        <div className="absolute -right-[7px] top-[7px] w-[15px] h-[15px] rounded-full bg-[#333] border border-[#888] flex items-center justify-center text-[10px] leading-none">2</div>
      </div>
    </div>
  );
}

export default function App() {
  return (
    <div className="w-[1366px] h-[768px] overflow-hidden flex flex-col bg-[#f0f0f0] font-['Liberation_Sans','Noto_Sans_CJK_SC',sans-serif]">
      <TitleBar />
      <MenuBar />
      <ToolBar />
      <div className="flex-1 min-h-0 flex">
        <NavPanel />
        <div className="w-[363px] shrink-0 flex flex-col">
          <SubToolBar />
          <div className="flex-1 min-h-0 flex">
            <MiddlePanel />
            <PropPanel />
          </div>
        </div>
        <EditorPanel />
      </div>
      <StatusBar />
      <TaskBar />
    </div>
  );
}
